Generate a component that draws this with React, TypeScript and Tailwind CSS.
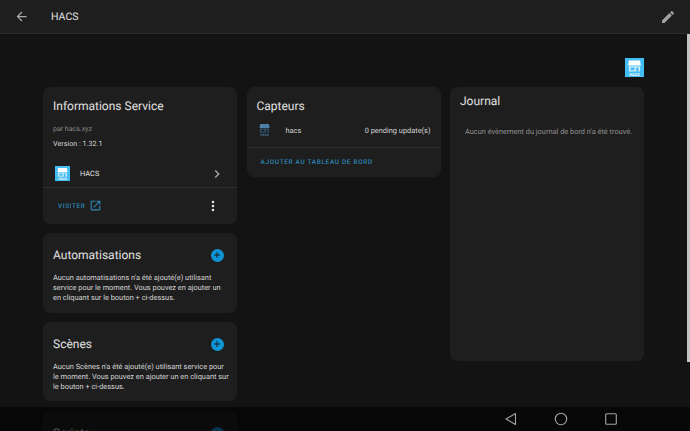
import { FC, ReactNode } from "react";

const Mdi: FC<{ d: string; className: string }> = ({ d, className }) => (
  <svg viewBox="0 0 24 24" className={className} fill="currentColor">
    <path d={d} />
  </svg>
);

const HacsLogo: FC<{ className: string; plain?: boolean }> = ({ className, plain }) => (
  <svg viewBox="0 0 24 24" className={className}>
    {!plain && <rect width="24" height="24" fill="#41bdf5" />}
    <path d="M5 3h14l1 6.5H4z" fill={plain ? "#4a7fa8" : "#ffffff"} />
    <path d="M5 10.5h14V17H5z" fill={plain ? "#35566f" : "#d5f1fc"} />
    <path d="M7 12h5v3.5H7zM14 12h3v5h-3z" fill={plain ? "#12202b" : "#41bdf5"} />
    <text x="12" y="22.5" textAnchor="middle" fontSize="5" fontWeight="700" fill={plain ? "#4a7fa8" : "#ffffff"}>
      HACS
    </text>
  </svg>
);

const Card: FC<{ className: string; children: ReactNode }> = ({ className, children }) => (
  <div className={`rounded-[7px] bg-[#1c1c1c] ${className}`}>{children}</div>
);

const AddCard: FC<{ title: string; className: string; children?: ReactNode }> = ({ title, className, children }) => (
  <Card className={className}>
    <div className="flex h-[40px] items-center justify-between pl-[10px] pr-[13.5px] pt-[4px]">
      <span className="text-[12px] leading-none text-[#e1e1e1]">{title}</span>
      <span className="flex size-[13px] items-center justify-center rounded-full bg-[#0d94d6]">
        <Mdi d="M19,13H13V19H11V13H5V11H11V5H13V11H19V13Z" className="size-[10px] text-[#111111]" />
      </span>
    </div>
    <p className="pl-[10px] pr-[8px] text-[7.4px] leading-[10px] text-[#d4d4d4]">{children}</p>
  </Card>
);

export default function App() {
  return (
    <div className="relative h-[431px] w-[690px] overflow-hidden bg-[#111111] font-['Roboto',sans-serif] antialiased opacity-[0.99] [text-rendering:geometricPrecision]">
      <header className="flex h-[34px] items-center border-b border-[#2a2a2a] bg-[#1c1c1c] pl-[14px] pr-[14px]">
        <Mdi d="M20,11V13H8L13.5,18.5L12.08,19.92L4.16,12L12.08,4.08L13.5,5.5L8,11H20Z" className="size-[15px] text-[#a8a8a8]" />
        <span className="ml-[22px] text-[10.5px] text-[#e1e1e1]">HACS</span>
        <Mdi
          d="M20.71,7.04C21.1,6.65 21.1,6 20.71,5.63L18.37,3.29C18,2.9 17.35,2.9 16.96,3.29L15.12,5.12L18.87,8.87M3,17.25V21H6.75L17.81,9.93L14.06,6.18L3,17.25Z"
          className="ml-auto size-[16px] text-[#a0a0a0]"
        />
      </header>

      <div className="absolute right-0 top-[34px] h-[328px] w-[3px] bg-[#c4c4c4]" />

      <main className="pl-[43px] pr-[46px] pt-[24px]">
        <div className="mb-[10px] flex justify-end">
          <HacsLogo className="size-[19px]" />
        </div>
        <div className="grid grid-cols-[194px_194px_194px] gap-x-[9.5px]">
          <div className="flex flex-col gap-[9px]">
            <Card className="h-[137px]">
              <div className="px-[10px] pt-[10px]">
                <h2 className="text-[12px] leading-[18px] text-[#e1e1e1]">Informations Service</h2>
                <p className="mt-[9px] text-[7px] leading-[10px] text-[#8a8a8a]">par hacs.xyz</p>
                <p className="mt-[5px] text-[7.2px] leading-[10px] text-[#d4d4d4]">Version : 1.32.1</p>
              </div>
              <div className="mt-[11px] flex h-[28px] items-center border-b border-[#2a2a2a] pl-[12px] pr-[12px]">
                <HacsLogo className="size-[15px]" />
                <span className="ml-[10px] text-[7.4px] text-[#e1e1e1]">HACS</span>
                <Mdi d="M8.59,16.58L13.17,12L8.59,7.41L10,6L16,12L10,18L8.59,16.58Z" className="ml-auto size-[16px] text-[#a8a8a8]" />
              </div>
              <div className="flex h-[35px] items-center pl-[15px] pr-[16px]">
                <span className="mt-[2px] text-[6.4px] font-medium tracking-[0.6px] text-[#2b87b8]">VISITER</span>
                <Mdi
                  d="M14,3V5H17.59L7.76,14.83L9.17,16.24L19,6.41V10H21V3M19,19H5V5H12V3H5C3.89,3 3,3.9 3,5V19A2,2 0 0,0 5,21H19A2,2 0 0,0 21,19V12H19V19Z"
                  className="ml-[4px] size-[13px] text-[#2b87b8]"
                />
                <Mdi
                  d="M12,16A2,2 0 0,1 14,18A2,2 0 0,1 12,20A2,2 0 0,1 10,18A2,2 0 0,1 12,16M12,10A2,2 0 0,1 14,12A2,2 0 0,1 12,14A2,2 0 0,1 10,12A2,2 0 0,1 12,10M12,4A2,2 0 0,1 14,6A2,2 0 0,1 12,8A2,2 0 0,1 10,6A2,2 0 0,1 12,4Z"
                  className="ml-auto size-[16px] text-[#e1e1e1]"
                />
              </div>
            </Card>
            <AddCard title="Automatisations" className="h-[80px]">
              Aucun automatisations n'a été ajouté(e) utilisant service pour le moment. Vous pouvez en ajouter un en cliquant sur le bouton + ci-dessus.
            </AddCard>
            <AddCard title="Scènes" className="h-[79px]">
              Aucun Scènes n'a été ajouté(e) utilisant service pour le moment. Vous pouvez en ajouter un en cliquant sur le bouton + ci-dessus.
            </AddCard>
            <AddCard title="Scripts" className="mt-[1px] h-[80px]" />
          </div>

          <Card className="h-[90px]">
            <h2 className="px-[10px] pt-[10px] text-[12px] leading-[18px] text-[#e1e1e1]">Capteurs</h2>
            <div className="mt-[3px] flex h-[30px] items-start border-b border-[#2a2a2a] pl-[10px] pr-[10px] pt-[4px]">
              <HacsLogo className="size-[15px]" plain />
              <span className="ml-[14px] mt-[3px] text-[7.4px] text-[#d4d4d4]">hacs</span>
              <span className="ml-auto mt-[3px] text-[7.4px] text-[#d4d4d4]">0 pending update(s)</span>
            </div>
            <div className="flex h-[27px] items-center pl-[14px] pt-[3px] text-[6.4px] font-medium tracking-[0.7px] text-[#2b87b8]">
              AJOUTER AU TABLEAU DE BORD
            </div>
          </Card>

          <Card className="h-[274px]">
            <h2 className="px-[10px] pt-[5px] text-[12px] leading-[18px] text-[#e1e1e1]">Journal</h2>
            <p className="mt-[17px] pl-[15px] text-[7.4px] leading-[10px] text-[#8f8f8f]">
              Aucun évènement du journal de bord n'a été trouvé.
            </p>
          </Card>
        </div>
      </main>

      <nav className="absolute bottom-0 left-0 flex h-[24px] w-full items-center bg-[#000000]/65 pl-[504px] text-[#a3a3a3]">
        <svg viewBox="0 0 14 14" className="size-[14px]" fill="none" stroke="currentColor" strokeWidth="1.1">
          <path d="M11.5 1.5v11L2 7z" strokeLinejoin="round" />
        </svg>
        <svg viewBox="0 0 14 14" className="ml-[36px] size-[14px]" fill="none" stroke="currentColor" strokeWidth="1.1">
          <circle cx="7" cy="7" r="5.7" />
        </svg>
        <svg viewBox="0 0 14 14" className="ml-[36px] size-[14px]" fill="none" stroke="currentColor" strokeWidth="1.1">
          <rect x="1.7" y="1.7" width="10.6" height="10.6" rx="1" />
        </svg>
      </nav>
    </div>
  );
}
